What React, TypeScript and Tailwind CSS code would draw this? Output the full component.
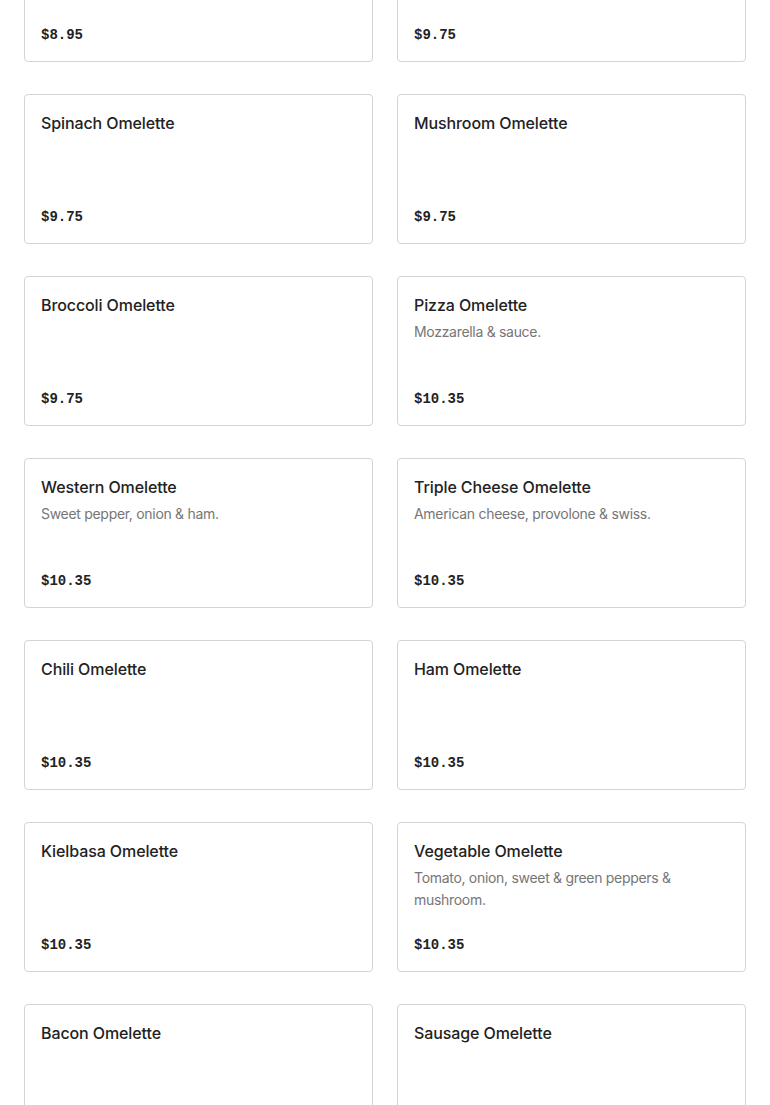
const ITEMS = [
  { name: "Cheese Omelette", desc: "", price: "$8.95" },
  { name: "Tomato Omelette", desc: "", price: "$9.75" },
  { name: "Spinach Omelette", desc: "", price: "$9.75" },
  { name: "Mushroom Omelette", desc: "", price: "$9.75" },
  { name: "Broccoli Omelette", desc: "", price: "$9.75" },
  { name: "Pizza Omelette", desc: "Mozzarella & sauce.", price: "$10.35" },
  { name: "Western Omelette", desc: "Sweet pepper, onion & ham.", price: "$10.35" },
  { name: "Triple Cheese Omelette", desc: "American cheese, provolone & swiss.", price: "$10.35" },
  { name: "Chili Omelette", desc: "", price: "$10.35" },
  { name: "Ham Omelette", desc: "", price: "$10.35" },
  { name: "Kielbasa Omelette", desc: "", price: "$10.35" },
  { name: "Vegetable Omelette", desc: "Tomato, onion, sweet & green peppers & mushroom.", price: "$10.35" },
  { name: "Bacon Omelette", desc: "", price: "$10.35" },
  { name: "Sausage Omelette", desc: "", price: "$10.35" },
];

function MenuCard({ name, desc, price }: { name: string; desc: string; price: string }) {
  return (
    <div className="flex h-[150px] flex-col justify-between rounded-[4px] border border-[#d4d4d4] bg-white px-4 pt-4 pb-[14px]">
      <div>
        <div className="text-[16px] font-medium leading-6 tracking-[-0.1px] text-[#222222]">{name}</div>
        {desc && (
          <p className="mt-1 text-[14px] leading-[22px] tracking-[-0.3px] text-[#767676]">{desc}</p>
        )}
      </div>
      <div className="font-['Liberation_Mono',monospace] text-[14px] font-bold leading-6 text-[#222222]">
        {price}
      </div>
    </div>
  );
}

export default function App() {
  return (
    <div className="h-[1105px] overflow-hidden bg-white font-['Inter',sans-serif]">
      <div className="-mt-[88px] grid grid-cols-2 gap-x-6 gap-y-8 px-6">
        {ITEMS.map((it) => (
          <MenuCard key={it.name} {...it} />
        ))}
      </div>
    </div>
  );
}
